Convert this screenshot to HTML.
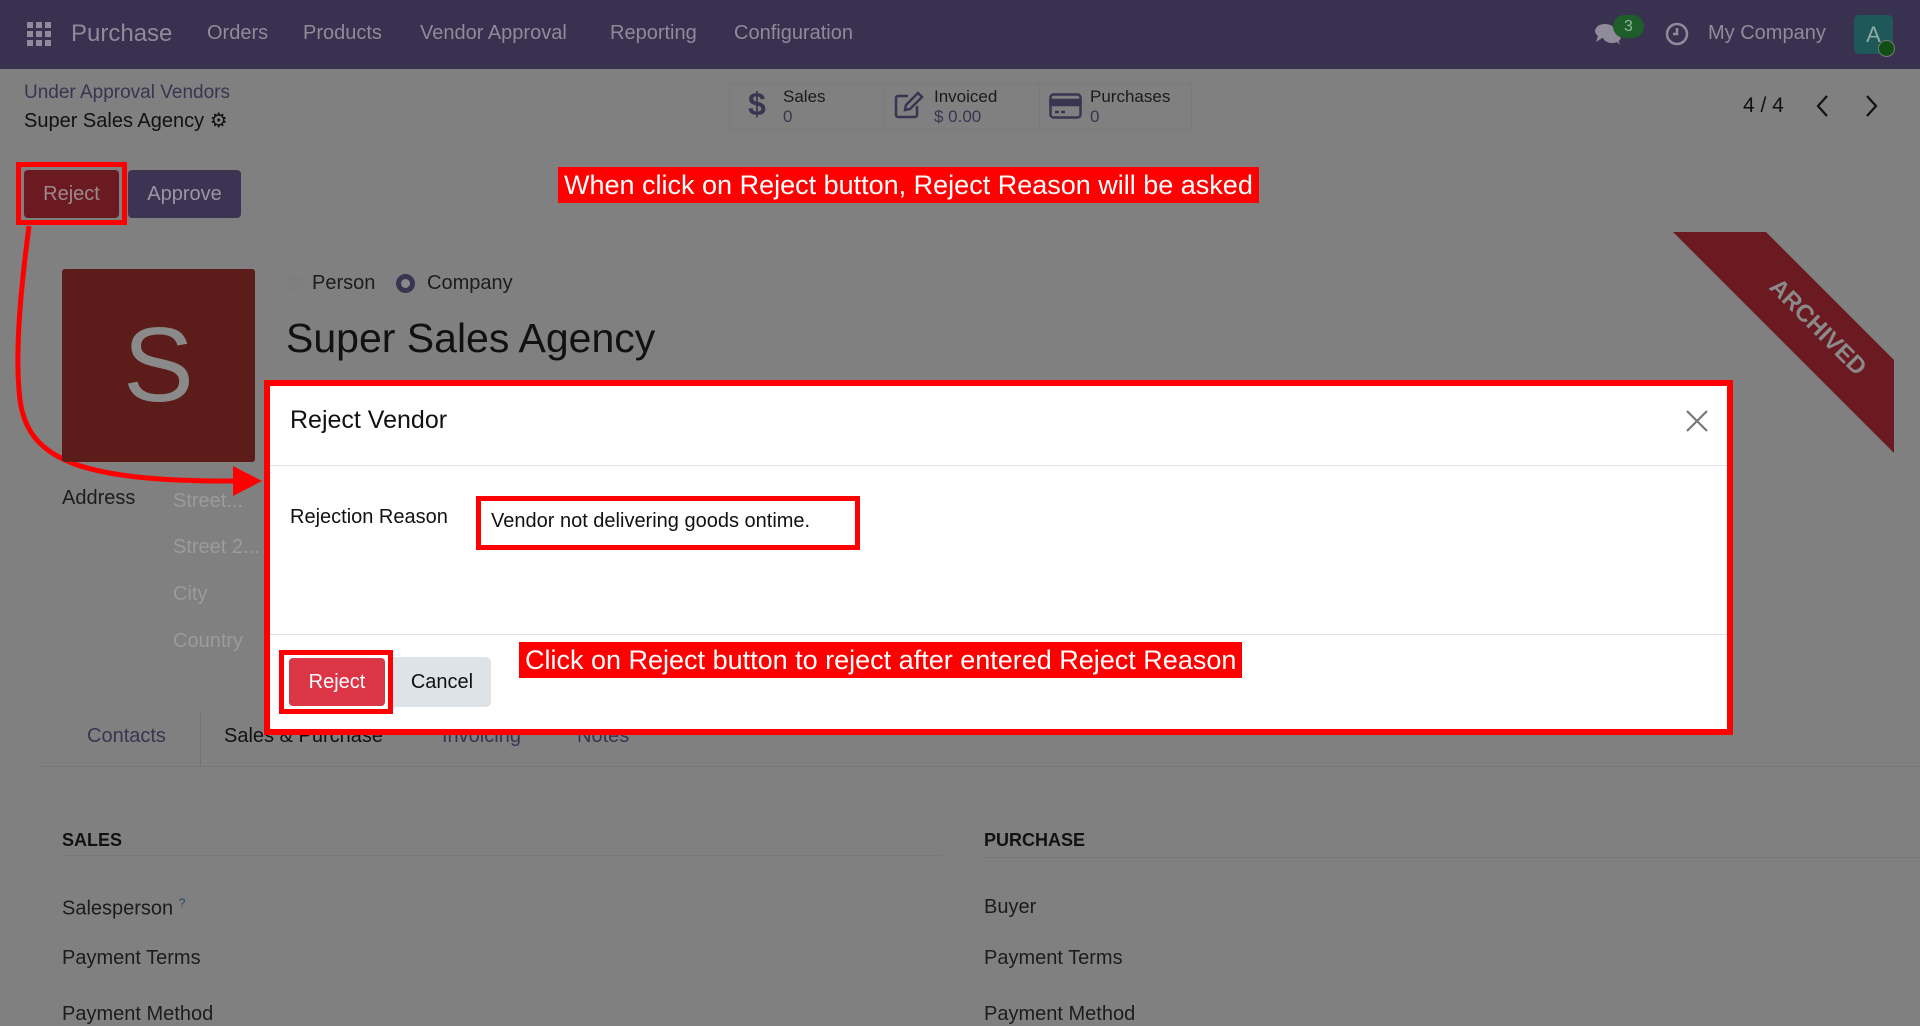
<!DOCTYPE html>
<html><head><meta charset="utf-8"><style>
*{margin:0;padding:0;box-sizing:border-box}
body{width:1920px;height:1020px;overflow:hidden;background:#808080;font-family:"Liberation Sans",sans-serif;position:relative;color:#1a1a1a}
.a{position:absolute;white-space:nowrap}
.nav{left:0;top:0;width:1920px;height:69px;background:#393150}
.nt{color:#8f8b9a;font-size:20px;top:22px}
.lbl{font-size:20px;color:#1c1c1c}
.ph{font-size:20px;color:#9b9b9b}
.note{background:#ff0000;color:#fff;font-size:27px;padding:2px 6px;line-height:32px}
</style></head><body>
<div class="a nav"></div>
<svg class="a" style="left:27px;top:22px" width="24" height="24" viewBox="0 0 24 24" fill="#8f8b9a"><rect x="0" y="0" width="6" height="6"/><rect x="9" y="0" width="6" height="6"/><rect x="18" y="0" width="6" height="6"/><rect x="0" y="9" width="6" height="6"/><rect x="9" y="9" width="6" height="6"/><rect x="18" y="9" width="6" height="6"/><rect x="0" y="18" width="6" height="6"/><rect x="9" y="18" width="6" height="6"/><rect x="18" y="18" width="6" height="6"/></svg>
<div class="a nt" style="left:71px;top:20px;font-size:24px">Purchase</div>
<div class="a nt" style="left:207px">Orders</div>
<div class="a nt" style="left:303px">Products</div>
<div class="a nt" style="left:420px">Vendor Approval</div>
<div class="a nt" style="left:610px">Reporting</div>
<div class="a nt" style="left:734px">Configuration</div>
<svg class="a" style="left:1594px;top:22px" width="30" height="24" viewBox="0 0 30 24" fill="#8f8b9a"><ellipse cx="11" cy="9" rx="10" ry="7"/><path d="M4 14 L2 20 L10 15Z"/><ellipse cx="18" cy="15" rx="9" ry="6"/><path d="M22 19 L26 23 L24 17Z"/></svg>
<div class="a" style="left:1613px;top:15px;width:31px;height:23px;border-radius:12px;background:#1d5e2a;color:#8fb597;font-size:16px;text-align:center;line-height:23px">3</div>
<svg class="a" style="left:1665px;top:22px" width="24" height="24" viewBox="0 0 24 24" fill="none" stroke="#8f8b9a" stroke-width="2.5"><circle cx="12" cy="12" r="10"/><path d="M12 6v6h-4"/></svg>
<div class="a nt" style="left:1708px">My Company</div>
<div class="a" style="left:1854px;top:15px;width:39px;height:39px;border-radius:5px;background:#1f5858;color:#8fa9a9;font-size:22px;text-align:center;line-height:39px">A</div>
<div class="a" style="left:1878px;top:40px;width:17px;height:17px;border-radius:50%;background:#0e4f14;border:1.5px solid #777"></div>

<div class="a" style="left:24px;top:82px;font-size:19px;color:#3a3450">Under Approval Vendors</div>
<div class="a" style="left:24px;top:108px;font-size:20px;color:#111">Super Sales Agency <span style="font-size:20px">⚙</span></div>

<div class="a" style="left:729px;top:83px;width:463px;height:47px;border:1px solid #7a7a7a"></div>
<div class="a" style="left:883px;top:83px;width:1px;height:47px;background:#7a7a7a"></div>
<div class="a" style="left:1039px;top:83px;width:1px;height:47px;background:#7a7a7a"></div>
<div class="a" style="left:748px;top:86px;font-size:32px;font-weight:bold;color:#3a3450">$</div>
<div class="a" style="left:783px;top:87px;font-size:17px;line-height:20px;color:#1a1a1a">Sales<br><span style="color:#3a3450">0</span></div>
<svg class="a" style="left:894px;top:91px" width="30" height="28" viewBox="0 0 30 28" fill="none" stroke="#3a3450" stroke-width="2.5"><path d="M14 5H4a2 2 0 0 0-2 2v17a2 2 0 0 0 2 2h17a2 2 0 0 0 2-2v-9"/><path d="M24 2l4 4-12 12-5 1 1-5z"/></svg>
<div class="a" style="left:934px;top:87px;font-size:17px;line-height:20px;color:#1a1a1a">Invoiced<br><span style="color:#3a3450">$ 0.00</span></div>
<svg class="a" style="left:1049px;top:93px" width="33" height="26" viewBox="0 0 33 26" fill="none" stroke="#3a3450" stroke-width="2.5"><rect x="1.5" y="1.5" width="30" height="23" rx="3"/><rect x="1.5" y="7" width="30" height="5" fill="#3a3450"/><path d="M6 19h4M12 19h4"/></svg>
<div class="a" style="left:1090px;top:87px;font-size:17px;line-height:20px;color:#1a1a1a">Purchases<br><span style="color:#3a3450">0</span></div>

<div class="a" style="left:1743px;top:94px;font-size:21px;color:#111">4 / 4</div>
<svg class="a" style="left:1814px;top:94px" width="18" height="24" viewBox="0 0 18 24" fill="none" stroke="#111" stroke-width="2.2"><path d="M13 2L4 12l9 10"/></svg>
<svg class="a" style="left:1862px;top:94px" width="18" height="24" viewBox="0 0 18 24" fill="none" stroke="#111" stroke-width="2.2"><path d="M5 2l9 10-9 10"/></svg>

<div class="a" style="left:16px;top:162px;width:111px;height:63px;border:5px solid #ff0000"></div>
<div class="a" style="left:24px;top:170px;width:95px;height:48px;background:#6b1a22;border-radius:4px;color:#9a8a8c;font-size:20px;text-align:center;line-height:48px">Reject</div>
<div class="a" style="left:128px;top:170px;width:113px;height:48px;background:#3c3452;border-radius:4px;color:#9a96a6;font-size:20px;text-align:center;line-height:48px">Approve</div>
<div class="a note" style="left:558px;top:167px">When click on Reject button, Reject Reason will be asked</div>

<svg class="a" style="left:0;top:220px" width="280" height="280" viewBox="0 0 280 280" fill="none"><path d="M29 6 C22 60 14 130 20 180 C28 240 80 262 240 261" stroke="#ff0000" stroke-width="5"/><path d="M233 246 L262 261 L233 276Z" fill="#ff0000"/></svg>

<svg class="a" style="left:1600px;top:220px" width="320" height="260"><polygon points="73,12 166,12 294,140 294,233" fill="#6b1a22"/><text x="0" y="0" font-family="Liberation Sans" font-weight="bold" font-size="24" fill="#8a8a8a" text-anchor="middle" dominant-baseline="middle" style="transform:translate(217px,108px) rotate(45deg)">ARCHIVED</text></svg>

<div class="a" style="left:62px;top:269px;width:193px;height:193px;background:#5b1c1a;border-radius:3px;color:#8a8a8a;font-size:106px;text-align:center;line-height:193px">S</div>
<div class="a" style="left:287px;top:275px;width:16px;height:16px;border-radius:50%;background:#7e7e7e"></div>
<div class="a lbl" style="left:312px;top:272px">Person</div>
<div class="a" style="left:396px;top:274px;width:19px;height:19px;border-radius:50%;border:5px solid #3a3450;background:#8a8a8a"></div>
<div class="a lbl" style="left:427px;top:272px">Company</div>
<div class="a" style="left:286px;top:315px;font-size:41px;color:#111">Super Sales Agency</div>

<div class="a lbl" style="left:62px;top:487px">Address</div>
<div class="a ph" style="left:173px;top:490px">Street...</div>
<div class="a ph" style="left:173px;top:536px">Street 2...</div>
<div class="a ph" style="left:173px;top:583px">City</div>
<div class="a ph" style="left:173px;top:630px">Country</div>

<div class="a" style="left:200px;top:712px;width:1px;height:54px;background:#737373"></div>
<div class="a" style="left:40px;top:766px;width:1880px;height:1px;background:#787878"></div>
<div class="a" style="left:87px;top:725px;font-size:20px;color:#3a3450">Contacts</div>
<div class="a" style="left:224px;top:725px;font-size:20px;color:#111">Sales &amp; Purchase</div>
<div class="a" style="left:442px;top:725px;font-size:20px;color:#3a3450">Invoicing</div>
<div class="a" style="left:577px;top:725px;font-size:20px;color:#3a3450">Notes</div>

<div class="a" style="left:62px;top:830px;font-size:18px;font-weight:bold;color:#111">SALES</div>
<div class="a" style="left:984px;top:830px;font-size:18px;font-weight:bold;color:#111">PURCHASE</div>
<div class="a" style="left:62px;top:855px;width:880px;height:1px;background:#787878"></div>
<div class="a" style="left:984px;top:857px;width:936px;height:1px;background:#787878"></div>
<div class="a lbl" style="left:62px;top:896px">Salesperson <sup style="font-size:12px;color:#1f4d5e">?</sup></div>
<div class="a lbl" style="left:62px;top:947px">Payment Terms</div>
<div class="a lbl" style="left:62px;top:1003px">Payment Method</div>
<div class="a lbl" style="left:984px;top:896px">Buyer</div>
<div class="a lbl" style="left:984px;top:947px">Payment Terms</div>
<div class="a lbl" style="left:984px;top:1003px">Payment Method</div>

<div class="a" style="left:264px;top:380px;width:1469px;height:355px;border:6px solid #ff0000;background:#fff"></div>
<div class="a" style="left:290px;top:406px;font-size:25px;color:#111">Reject Vendor</div>
<svg class="a" style="left:1686px;top:410px" width="22" height="22" viewBox="0 0 22 22" stroke="#777" stroke-width="2.2"><path d="M1 1L21 21M21 1L1 21"/></svg>
<div class="a" style="left:270px;top:465px;width:1457px;height:1px;background:#dee2e6"></div>
<div class="a" style="left:290px;top:506px;font-size:20px;color:#111">Rejection Reason</div>
<div class="a" style="left:476px;top:496px;width:384px;height:54px;border:5px solid #ff0000"></div>
<div class="a" style="left:491px;top:510px;font-size:20px;color:#111">Vendor not delivering goods ontime.</div>
<div class="a" style="left:270px;top:634px;width:1457px;height:1px;background:#dee2e6"></div>
<div class="a" style="left:279px;top:650px;width:114px;height:64px;border:5px solid #ff0000"></div>
<div class="a" style="left:289px;top:658px;width:96px;height:48px;background:#dc3545;border-radius:4px;color:#fff;font-size:20px;text-align:center;line-height:48px">Reject</div>
<div class="a" style="left:393px;top:657px;width:98px;height:50px;background:#dee3e7;border-radius:0 5px 5px 0;color:#111;font-size:20px;text-align:center;line-height:50px">Cancel</div>
<div class="a note" style="left:519px;top:642px">Click on Reject button to reject after entered Reject Reason</div>
</body></html>
